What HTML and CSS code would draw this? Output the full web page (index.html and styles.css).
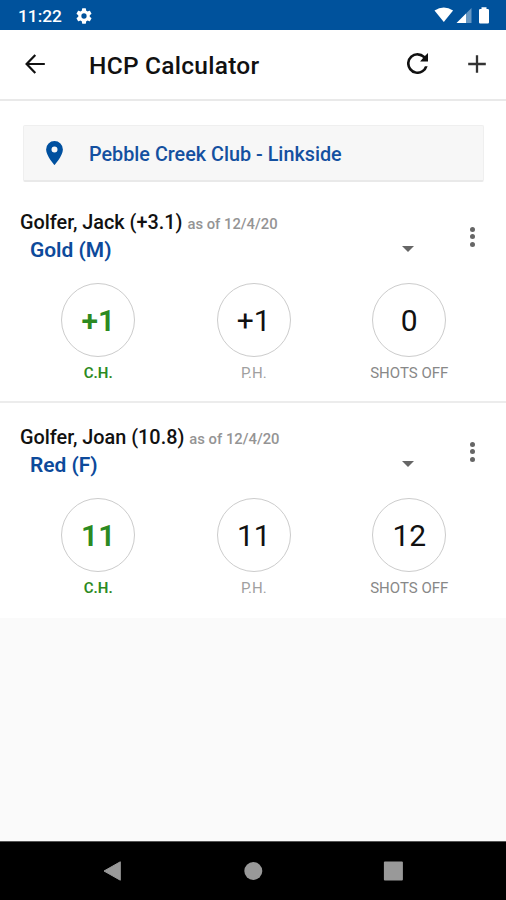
FILE: index.html
```html
<!DOCTYPE html>
<html lang="en">
<head>
<meta charset="utf-8">
<title>HCP Calculator</title>
<link rel="stylesheet" href="styles.css">
</head>
<body>
<div class="screen">
  <div class="status-bar">
    <span class="clock">11:22</span>
    <svg class="gear" viewBox="2 2 20 20"><path fill="#fff" fill-rule="evenodd" d="M19.14 12.94c.04-.3.06-.61.06-.94s-.02-.64-.07-.94l2.03-1.58a.49.49 0 0 0 .12-.61l-1.92-3.32a.49.49 0 0 0-.59-.22l-2.39.96a7 7 0 0 0-1.62-.94l-.36-2.54a.48.48 0 0 0-.48-.41h-3.84a.48.48 0 0 0-.47.41l-.36 2.54c-.59.24-1.13.57-1.62.94l-2.39-.96a.48.48 0 0 0-.59.22L2.73 8.87a.48.48 0 0 0 .12.61l2.03 1.58a6 6 0 0 0 0 1.88l-2.03 1.58a.49.49 0 0 0-.12.61l1.92 3.32c.12.22.37.29.59.22l2.39-.96c.5.38 1.03.7 1.62.94l.36 2.54c.05.24.24.41.48.41h3.84c.24 0 .44-.17.47-.41l.36-2.54c.59-.24 1.13-.56 1.62-.94l2.39.96c.22.08.47 0 .59-.22l1.92-3.32a.48.48 0 0 0-.12-.61zM12 15.3a3.3 3.3 0 1 1 0-6.6 3.3 3.3 0 0 1 0 6.600z"/></svg>
    <svg class="signals" viewBox="0 0 60 20"><g fill="#fff"><path d="M.5 4.600Q9.800 -1.600 19.100 4.600L9.800 16z"/><path d="M22.500 17L32 7.500V17z"/><path opacity=".4" d="M32 7.500L37.500 2V17H32z"/><path d="M47.500 1.200h5v1.800h1.300q1.200 0 1.200 1.200v12q0 1.200-1.200 1.200h-7.600q-1.200 0-1.200-1.200v-12q0-1.200 1.200-1.200h1.300z"/></g></svg>
  </div>
  <header class="app-bar">
    <svg class="back" viewBox="0 0 20 20" fill="none" stroke="#111" stroke-width="2.200"><path d="M10.300 1L1.600 10l8.700 9M1.800 10H19.800"/></svg>
    <h1>HCP Calculator</h1>
    <svg class="refresh" viewBox="4 4 16 16"><path fill="#111" d="M17.650 6.350A7.958 7.958 0 0 0 12 4a8 8 0 1 0 7.730 10h-2.080A6 6 0 1 1 12 6c1.660 0 3.140.69 4.220 1.780L14 10.500h6V4z"/></svg>
    <svg class="add" viewBox="0 0 18 18" stroke="#333" stroke-width="2.300"><path d="M9 .2v17.600M.2 9h17.600"/></svg>
  </header>
  <main>
    <div class="course">
      <svg class="pin" viewBox="5 2 14 20"><path fill="#00509f" fill-rule="evenodd" d="M12 2a7 7 0 0 0-7 7c0 5.250 7 13 7 13s7-7.750 7-13a7 7 0 0 0-7-7zm0 9.500a2.500 2.500 0 1 1 0-5 2.500 2.500 0 0 1 0 5z"/></svg>
      <span class="course-name">Pebble Creek Club - Linkside</span>
    </div>
    <section class="golfer">
      <div class="heading">
        <div class="who">
          <div class="name">Golfer, Jack (+3.1) <small>as of 12/4/20</small></div>
          <div class="tee"><span>Gold (M)</span><i class="caret"></i></div>
        </div>
        <div class="more"><i></i><i></i><i></i></div>
      </div>
      <div class="scores">
        <div class="score course-hcp"><div class="ring">+1</div><div class="label">C.H.</div></div>
        <div class="score playing"><div class="ring">+1</div><div class="label">P.H.</div></div>
        <div class="score"><div class="ring">0</div><div class="label">SHOTS OFF</div></div>
      </div>
    </section>
    <section class="golfer last">
      <div class="heading">
        <div class="who">
          <div class="name">Golfer, Joan (10.8) <small>as of 12/4/20</small></div>
          <div class="tee"><span>Red (F)</span><i class="caret"></i></div>
        </div>
        <div class="more"><i></i><i></i><i></i></div>
      </div>
      <div class="scores">
        <div class="score course-hcp"><div class="ring">11</div><div class="label">C.H.</div></div>
        <div class="score playing"><div class="ring">11</div><div class="label">P.H.</div></div>
        <div class="score"><div class="ring">12</div><div class="label">SHOTS OFF</div></div>
      </div>
    </section>
  </main>
  <nav class="nav-bar">
    <svg viewBox="0 0 20 20"><path fill="#999" stroke="#999" stroke-linejoin="round" d="M1 10L17.300 .8v18.400z"/></svg>
    <svg viewBox="0 0 20 20"><circle cx="10.300" cy="10" r="9" fill="#999"/></svg>
    <svg viewBox="0 0 20 20"><rect x=".9" y=".5" width="19" height="19" rx="1" fill="#999"/></svg>
  </nav>
</div>
</body>
</html>
```

FILE: styles.css
```css
* { box-sizing: border-box; }
body {
  margin: 0;
  font-family: Roboto, "Liberation Sans", sans-serif;
  color: #111;
  background: #fafafa;
}
svg { display: block; flex: none; }
.screen {
  width: 506px;
  height: 900px;
  display: flex;
  flex-direction: column;
  overflow: hidden;
}
.status-bar {
  height: 30px;
  flex: none;
  display: flex;
  align-items: center;
  padding: 1px 12px 0 18px;
  background: #00529c;
  color: #fff;
}
.clock { width: 58px; font-size: 17.300px; font-weight: 500; white-space: nowrap; }
.gear { width: 16px; height: 16px; }
.signals { width: 60px; height: 20px; margin-left: auto; }
.app-bar {
  height: 71px;
  flex: none;
  display: flex;
  align-items: center;
  padding: 0 20px 2px 25px;
  background: #fff;
  border-bottom: 2px solid #e9e9e9;
}
.back { width: 20px; height: 20px; }
.app-bar h1 {
  margin: 0 auto 0 44px;
  font-size: 24.500px;
  letter-spacing: .25px;
  font-weight: 500;
  line-height: 30px;
  padding-top: 4px;
  white-space: nowrap;
}
.refresh { width: 21px; height: 21px; }
.add { width: 18px; height: 18px; margin-left: 40px; }
main { background: #fff; padding-top: 24px; }
.course {
  height: 57px;
  margin: 0 22px 0 23px;
  display: flex;
  align-items: center;
  padding-left: 22px;
  background: #f7f7f7;
  border: 1px solid #efefef;
  border-bottom: 2px solid #e9e9e9;
  border-radius: 2px;
}
.pin { width: 17px; height: 24px; }
.course-name {
  margin-left: 26px;
  font-size: 19.800px;
  font-weight: 500;
  color: #1450a0;
  white-space: nowrap;
  padding-top: 2px;
}
.golfer { height: 215px; padding: 6px 20px 0; border-bottom: 2px solid #ececec; }
.golfer:first-of-type { height: 221px; padding-top: 27px; }
.golfer.last { border-bottom: 0; padding-top: 21px; }
.heading { display: flex; height: 56px; }
.who { width: 394px; flex: none; }
.name { font-size: 19.850px; font-weight: 500; line-height: 28px; white-space: nowrap; }
.name small { font-size: 14.800px; color: #949494; }
.tee {
  display: flex;
  align-items: center;
  justify-content: space-between;
  padding-left: 10px;
  height: 28px;
  margin-top: -2px;
  font-size: 20.950px;
  font-weight: 600;
  color: #0d4a9b;
}
.caret {
  border: 6px solid transparent;
  border-top-color: #666;
  border-bottom: 0;
  margin-top: -3px;
}
.more { display: flex; flex-direction: column; gap: 2.500px; margin: 17.500px 0 0 55.500px; }
.more i { width: 5px; height: 5px; border-radius: 50%; background: #666; }
.scores { display: grid; grid-template-columns: repeat(3, 155.500px); margin: 18px 0 0 .5px; }
.score { display: flex; flex-direction: column; align-items: center; }
.ring {
  width: 74px;
  height: 74px;
  border: 1.500px solid #ccc;
  border-radius: 50%;
  display: flex;
  align-items: center;
  justify-content: center;
  padding-top: 1px;
  font-size: 30px;
}
.label { margin-top: 7px; font-size: 15px; line-height: 18px; color: #888; white-space: nowrap; }
.playing .label { color: #a0a0a0; }
.course-hcp .ring, .course-hcp .label { color: #2c8a21; font-weight: 600; }
.nav-bar {
  height: 59px;
  flex: none;
  margin-top: auto;
  display: flex;
  align-items: center;
  justify-content: space-between;
  padding: 0 103px;
  background: #000;
  border-top: 1px solid #555;
}
.nav-bar svg { width: 20px; height: 20px; }
```
